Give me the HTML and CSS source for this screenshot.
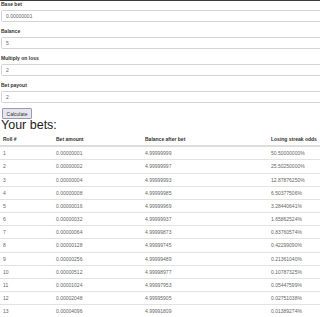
FILE: index.html
```html
<!DOCTYPE html>
<html>
<head>
<meta charset="utf-8">
<link rel="stylesheet" href="styles.css">
</head>
<body>
<div class="page">
  <div class="group">
    <label class="lbl">Base bet</label>
    <input class="field" type="text" value="0.00000001">
  </div>
  <div class="group">
    <label class="lbl">Balance</label>
    <input class="field" type="text" value="5">
  </div>
  <div class="group">
    <label class="lbl">Multiply on loss</label>
    <input class="field" type="text" value="2">
  </div>
  <div class="group">
    <label class="lbl">Bet payout</label>
    <input class="field" type="text" value="2">
  </div>
  <button class="btn">Calculate</button>
  <h2 class="title">Your bets:</h2>
  <table class="bets">
    <colgroup>
      <col class="c1"><col class="c2"><col class="c3"><col class="c4">
    </colgroup>
    <thead>
      <tr><th>Roll #</th><th>Bet amount</th><th>Balance after bet</th><th>Losing streak odds</th></tr>
    </thead>
    <tbody>
      <tr><td>1</td><td>0.00000001</td><td>4.99999999</td><td>50.50000000%</td></tr>
      <tr><td>2</td><td>0.00000002</td><td>4.99999997</td><td>25.50250000%</td></tr>
      <tr><td>3</td><td>0.00000004</td><td>4.99999993</td><td>12.87876250%</td></tr>
      <tr><td>4</td><td>0.00000008</td><td>4.99999985</td><td>6.50377506%</td></tr>
      <tr><td>5</td><td>0.00000016</td><td>4.99999969</td><td>3.28440641%</td></tr>
      <tr><td>6</td><td>0.00000032</td><td>4.99999937</td><td>1.65862524%</td></tr>
      <tr><td>7</td><td>0.00000064</td><td>4.99999873</td><td>0.83760574%</td></tr>
      <tr><td>8</td><td>0.00000128</td><td>4.99999745</td><td>0.42299090%</td></tr>
      <tr><td>9</td><td>0.00000256</td><td>4.99999489</td><td>0.21361040%</td></tr>
      <tr><td>10</td><td>0.00000512</td><td>4.99998977</td><td>0.10787325%</td></tr>
      <tr><td>11</td><td>0.00001024</td><td>4.99997953</td><td>0.05447599%</td></tr>
      <tr><td>12</td><td>0.00002048</td><td>4.99995905</td><td>0.02751038%</td></tr>
      <tr><td>13</td><td>0.00004096</td><td>4.99991809</td><td>0.01389274%</td></tr>
    </tbody>
  </table>
</div>
</body>
</html>
```

FILE: styles.css
```css
html, body {
  margin: 0;
  padding: 0;
  background: #fff;
}
body {
  font-family: "Liberation Sans", Arial, sans-serif;
  font-size: 5px;
  color: #333;
  border-top: 1px solid #3a3a3a;
  overflow: hidden;
}
.page {
  padding: 0 0 0 1px;
}
.group {
  display: flex;
  flex-direction: column;
  margin-bottom: 6px;
}
.lbl {
  font-weight: bold;
  line-height: 7px;
  height: 7px;
  margin-bottom: 2px;
  color: #333;
}
.field {
  box-sizing: border-box;
  width: calc(100% + 4px);
  height: 12px;
  margin: 0;
  padding: 0 4px;
  border: 1px solid #d4d4d4;
  border-radius: 1.5px;
  font-family: "Liberation Sans", Arial, sans-serif;
  font-size: 5px;
  color: #666;
  background: #fff;
  outline: none;
}
.btn {
  display: block;
  box-sizing: border-box;
  width: 30px;
  height: 11px;
  margin: -1px 0 0 1px;
  padding: 0;
  border: 1px solid #9a9ab8;
  border-radius: 1px;
  background: #e6e6ec;
  font-family: "Liberation Sans", Arial, sans-serif;
  font-size: 5px;
  color: #333;
}
.title {
  margin: 0;
  font-size: 12.5px;
  font-weight: normal;
  line-height: 13px;
  color: #222;
  height: 13px;
}
.bets {
  width: 320px;
  margin-left: -1px;
  margin-top: 0;
  border-collapse: collapse;
  table-layout: fixed;
}
.c1 { width: 53px; }
.c2 { width: 89px; }
.c3 { width: 126px; }
.c4 { width: 52px; }
.bets th, .bets td {
  text-align: left;
  padding: 3px 0 3px 3px;
  line-height: 6.17px;
  white-space: nowrap;
  overflow: hidden;
}
.bets th {
  font-weight: bold;
  color: #333;
  border-bottom: 2px solid #ddd;
  padding-top: 4px;
  padding-bottom: 3px;
}
.bets td {
  color: #666;
  border-top: 1px solid #e2e2e2;
}
.bets tbody tr:first-child td {
  border-top: none;
}
```
